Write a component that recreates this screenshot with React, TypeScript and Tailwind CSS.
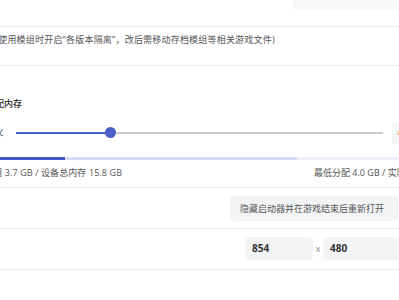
import React from "react";

export default function App() {
  const q = "font-['Noto_Sans',sans-serif]";
  return (
    <div className="w-[399px] h-[300px] overflow-hidden bg-white font-['Open_Sans','Noto_Sans_CJK_SC',sans-serif] text-[9px] text-[#444] flex flex-col">
      {/* Row A */}
      <div className="h-[26px] flex justify-end items-start shrink-0">
        <div className="w-[106px] h-[10px] bg-[#f7f8fa] rounded-bl-[3px]" />
      </div>
      <div className="h-px bg-[#ebebeb] shrink-0" />
      {/* Row B */}
      <div className="h-[38px] pt-[7px] shrink-0 whitespace-nowrap">
        <div className="leading-[12px] ml-[-11px] text-[#555] tracking-[0.2px]">
          在使用模组时开启<span className={q}>“</span>各版本隔离<span className={q}>”</span>，改后需移动存档模组等相关游戏文件)
        </div>
      </div>
      <div className="h-px bg-[#ebebeb] shrink-0" />
      {/* Section C */}
      <div className="h-[121px] flex flex-col shrink-0">
        <div className="mt-[31px] leading-[13px] ml-[-14px] text-[#222] font-medium whitespace-nowrap">
          分配内存
        </div>
        <div className="mt-[10px] h-[26px] flex items-center">
          <span className="ml-[-23px] w-[27px] shrink-0 leading-[12px] text-[#333] whitespace-nowrap">自定义</span>
          <div className="ml-[12px] w-[367px] shrink-0 h-[2px] relative flex">
            <div className="w-[94px] h-[2px] bg-[#4a5fc9]" />
            <div className="flex-1 h-[2px] bg-[#cccccc]" />
            <div className="absolute left-[89px] top-[-5px] w-[11px] h-[11px] rounded-full bg-[#4a5fc9]" />
          </div>
          <div className="ml-[9px] w-[60px] shrink-0 h-[22px] bg-[#f4f5f7] rounded-[3px] flex items-center pl-[5px] text-[#e0963a]">
            4
          </div>
        </div>
        <div className="mt-[11px] h-[3px] flex">
          <div className="w-[65px] bg-[#4358c2]" />
          <div className="w-[232px] bg-[#d6dcf4]" />
          <div className="flex-1 bg-[#eef1fb]" />
        </div>
        <div className="mt-[7px] leading-[12px] flex whitespace-nowrap text-[#555]">
          <span className="ml-[-25px] tracking-[0.1px]">已使用 3.7 GB / 设备总内存 15.8 GB</span>
          <span className="ml-auto mr-[-110px] w-[195px]">最低分配 4.0 GB / 实际分配 4.0 GB</span>
        </div>
      </div>
      <div className="h-px bg-[#ebebeb] shrink-0" />
      {/* Row D */}
      <div className="h-[40px] pt-[8px] flex shrink-0">
        <div className="ml-[230px] w-[168px] h-[25px] bg-[#f3f4f6] rounded-[3px] flex items-center pl-[10px] text-[#555] whitespace-nowrap">
          隐藏启动器并在游戏结束后重新打开
        </div>
      </div>
      <div className="h-px bg-[#ebebeb] shrink-0" />
      {/* Row E */}
      <div className="h-[40px] pt-[8px] flex shrink-0">
        <div className="ml-[245px] w-[76px] h-[23px] bg-[#f3f4f6] rounded-[3px] flex items-center pl-[7px] text-[10px] font-bold text-[#333]">
          854
        </div>
        <div className="w-[11px] h-[23px] flex items-center justify-center text-[#888]">x</div>
        <div className="w-[76px] h-[23px] bg-[#f3f4f6] rounded-[3px] flex items-center pl-[7px] text-[10px] font-bold text-[#333] shrink-0">
          480
        </div>
      </div>
      <div className="h-px bg-[#ebebeb] shrink-0" />
    </div>
  );
}
